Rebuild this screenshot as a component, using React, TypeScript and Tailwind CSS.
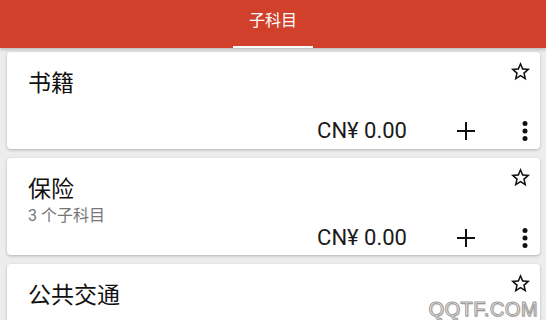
import { type ReactNode } from 'react'

interface Account {
  name: string
  sub?: string
  amount?: string
}

const accounts: Account[] = [
  { name: '书籍', amount: 'CN¥ 0.00' },
  { name: '保险', sub: '3 个子科目', amount: 'CN¥ 0.00' },
  { name: '公共交通', amount: 'CN¥ 0.00' },
]

const StarIcon = () => (
  <svg width="23" height="23" viewBox="0 0 24 24" fill="#111">
    <path d="M22 9.24l-7.19-.62L12 2 9.19 8.63 2 9.24l5.46 4.73L5.82 21 12 17.27 18.18 21l-1.63-7.03L22 9.24zM12 15.4l-3.76 2.27 1-4.28-3.32-2.88 4.38-.38L12 6.1l1.71 4.04 4.38.38-3.32 2.88 1 4.28L12 15.4z" />
  </svg>
)

const PlusIcon = () => (
  <svg width="18" height="18" viewBox="0 0 18 18" stroke="#111" strokeWidth="2">
    <line x1="9" y1="0" x2="9" y2="18" />
    <line x1="0" y1="9" x2="18" y2="9" />
  </svg>
)

const DotsIcon = () => (
  <svg width="6" height="22" viewBox="0 0 6 22" fill="#111">
    <circle cx="3" cy="3.5" r="2.5" />
    <circle cx="3" cy="11" r="2.5" />
    <circle cx="3" cy="18.5" r="2.5" />
  </svg>
)

const Card = ({ item, children }: { item: Account; children?: ReactNode }) => (
  <div className="flex h-[97px] shrink-0 flex-col rounded-[4px] bg-white shadow-[0_1px_3px_rgba(0,0,0,0.25)]">
    <div className="flex items-start justify-between pl-[21px] pr-[8px] pt-[8px]">
      <div className="pt-[10px]">
        <p className="text-[23px] leading-[28px] text-[#111]">{item.name}</p>
        {item.sub && <p className="mt-[2px] text-[16px] leading-[20px] text-[#777]">{item.sub}</p>}
      </div>
      <StarIcon />
    </div>
    {children}
  </div>
)

export default function App() {
  return (
    <div className="relative h-[320px] w-[546px] overflow-hidden bg-[#ededed] font-['Roboto','Noto_Sans_CJK_SC',sans-serif]">
      <header className="relative z-10 flex h-[48px] flex-col items-center bg-[#d0402b] shadow-[0_2px_3px_rgba(0,0,0,0.2)]">
        <div className="flex flex-1 items-center pb-[4px] text-[16px] text-white">子科目</div>
        <div className="h-[2px] w-[80px] bg-white"></div>
      </header>

      <main className="flex flex-col gap-[9px] px-[7px] pr-[6px] pt-[4px]">
        {accounts.map((item, i) => (
          <Card key={item.name} item={item}>
            {i < 2 && (
              <div className="mt-auto mb-[6px] flex h-[24px] items-center justify-end pr-[12px]">
                <span className="text-[22px] leading-[24px] text-[#1a1a1a]">{item.amount}</span>
                <span className="ml-[50px] flex"><PlusIcon /></span>
                <span className="ml-[47px] flex"><DotsIcon /></span>
              </div>
            )}
          </Card>
        ))}
      </main>

      <div className="absolute bottom-[1px] right-[8px] font-['Liberation_Sans',sans-serif] text-[20px] leading-[20px] tracking-[0.5px] text-white [-webkit-text-stroke:1px_#9a9a9a] [text-shadow:1px_1px_1px_rgba(0,0,0,0.25)]">
        QQTF.COM
      </div>
    </div>
  )
}
